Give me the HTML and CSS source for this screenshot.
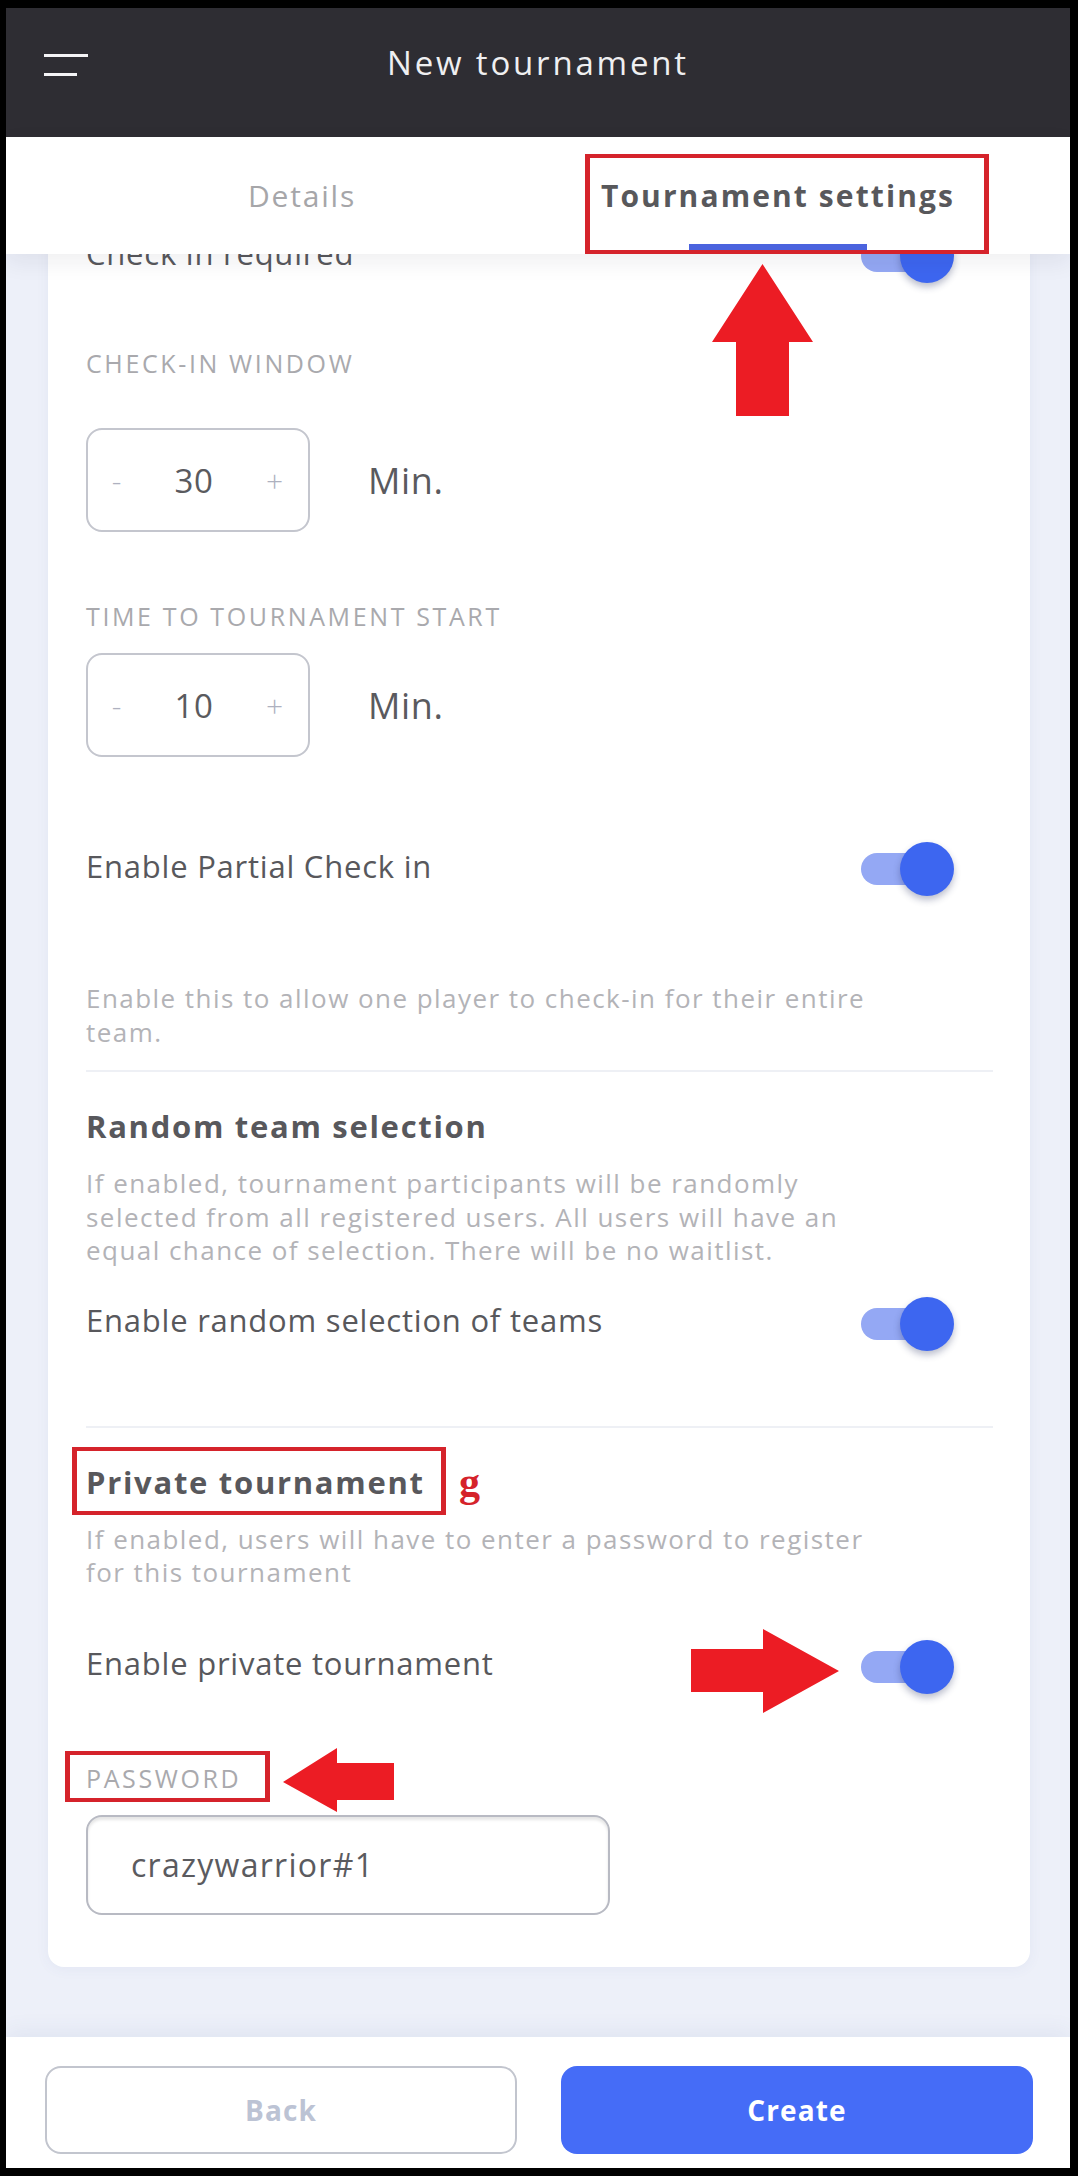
FILE: index.html
```html
<!DOCTYPE html>
<html lang="en">
<head>
  <meta charset="UTF-8" />
  <meta name="viewport" content="width=device-width, initial-scale=1.0" />
  <title>New tournament</title>
  <link rel="stylesheet" href="styles.css">
</head>
<body>
  <div class="phone">
    <header class="topbar">
      <button class="menu-btn" aria-label="Menu"><span></span><span></span></button>
      <h1>New tournament</h1>
    </header>

    <nav class="tabs">
      <div class="tab">Details</div>
      <div class="tab active">Tournament settings</div>
    </nav>

    <main class="scroller">
      <section class="card">
        <div class="switch-row">
          <span class="switch-label">Check in required</span>
          <span class="toggle"><span class="knob"></span></span>
        </div>

        <div class="field-label label-window">Check-in window</div>
        <div class="stepper-row stepper-window">
          <div class="stepper">
            <span class="step">-</span>
            <span class="step-value">30</span>
            <span class="step">+</span>
          </div>
          <span class="unit">Min.</span>
        </div>

        <div class="field-label label-start">Time to tournament start</div>
        <div class="stepper-row stepper-start">
          <div class="stepper">
            <span class="step">-</span>
            <span class="step-value">10</span>
            <span class="step">+</span>
          </div>
          <span class="unit">Min.</span>
        </div>

        <div class="switch-row row-partial">
          <span class="switch-label">Enable Partial Check in</span>
          <span class="toggle"><span class="knob"></span></span>
        </div>
        <p class="hint hint-partial">Enable this to allow one player to check-in for their entire team.</p>

        <hr class="divider">

        <h2 class="section-title">Random team selection</h2>
        <p class="hint">If enabled, tournament participants will be randomly selected from all registered users. All users will have an equal chance of selection. There will be no waitlist.</p>
        <div class="switch-row row-random">
          <span class="switch-label">Enable random selection of teams</span>
          <span class="toggle"><span class="knob"></span></span>
        </div>

        <hr class="divider divider-wide">

        <h2 class="section-title">Private tournament</h2>
        <p class="hint">If enabled, users will have to enter a password to register for this tournament</p>
        <div class="switch-row row-private">
          <span class="switch-label">Enable private tournament</span>
          <span class="toggle"><span class="knob"></span></span>
        </div>

        <div class="field-label label-password">Password</div>
        <input class="text-input" type="text" value="crazywarrior#1">
      </section>
    </main>

    <footer class="actions">
      <button class="btn btn-ghost">Back</button>
      <button class="btn btn-primary">Create</button>
    </footer>

    <!-- annotations drawn on top of the screenshot -->
    <div class="mark mark-tab"></div>
    <svg class="arrow arrow-up" width="101" height="152" viewBox="0 0 101 152">
      <polygon points="50.5,0 101,78 77,78 77,152 24,152 24,78 0,78" />
    </svg>
    <div class="mark mark-private"></div>
    <span class="note">g</span>
    <svg class="arrow arrow-right" width="148" height="84" viewBox="0 0 148 84">
      <polygon points="0,20 72,20 72,0 148,42 72,84 72,63 0,63" />
    </svg>
    <div class="mark mark-password"></div>
    <svg class="arrow arrow-left" width="111" height="64" viewBox="0 0 111 64">
      <polygon points="0,34 54,0 54,15 111,15 111,52 54,52 54,64" />
    </svg>
  </div>
</body>
</html>
```

FILE: styles.css
```css
* {
  box-sizing: border-box;
}
body {
  margin: 0;
  padding: 8px 8px 8px 6px;
  background: #000;
  font-family: 'Open Sans', 'Liberation Sans', sans-serif;
  letter-spacing: 0.04em;
  color: #58585c;
}
.phone {
  position: relative;
  height: 2160px;
  display: flex;
  flex-direction: column;
  background: #edf0f9;
  overflow: hidden;
}

/* top bar */
.topbar {
  flex: none;
  height: 129px;
  display: grid;
  grid-template-columns: 1fr auto 1fr;
  align-items: center;
  padding: 0 38px 20px;
  background: #2e2d33;
}
.topbar h1 {
  margin: 0;
  font-size: 33px;
  font-weight: 400;
  line-height: 40px;
  letter-spacing: 0.085em;
  color: #efeff1;
}
.menu-btn {
  justify-self: start;
  display: flex;
  flex-direction: column;
  gap: 16px;
  margin-top: 5px;
  padding: 0;
  background: none;
  border: none;
}
.menu-btn span {
  display: block;
  width: 44px;
  height: 3px;
  background: #f4f4f6;
}
.menu-btn span:last-child {
  width: 33px;
}

/* tabs */
.tabs {
  flex: none;
  position: relative;
  z-index: 2;
  height: 117px;
  display: flex;
  padding: 0 54px 0 58px;
  background: #fff;
  box-shadow: 0 8px 22px rgba(30, 30, 50, 0.07);
}
.tab {
  flex: 1;
  position: relative;
  display: flex;
  align-items: center;
  justify-content: center;
  font-size: 30px;
  letter-spacing: 0.06em;
  color: #a6a6a9;
}
.tab.active {
  font-weight: 700;
  letter-spacing: 0.07em;
  color: #58585b;
}
.tab.active::after {
  content: '';
  position: absolute;
  left: 50%;
  bottom: 4px;
  width: 178px;
  height: 6px;
  margin-left: -89px;
  background: #4b63de;
}

/* scrolling content */
.scroller {
  flex: 1;
  min-height: 0;
  overflow: hidden;
  padding: 0 40px 0 42px;
}
.card {
  margin-top: -60px;
  padding: 34px 37px 52px 38px;
  background: #fff;
  border-radius: 16px;
  box-shadow: 0 2px 14px rgba(70, 90, 150, 0.06);
}
.switch-row {
  display: flex;
  align-items: center;
  justify-content: space-between;
  height: 56px;
  padding-right: 39px;
}
.switch-label {
  font-size: 31px;
  line-height: 40px;
  letter-spacing: 0.025em;
  padding-bottom: 7px;
}
.toggle {
  position: relative;
  flex: none;
  width: 93px;
  height: 54px;
}
.toggle::before {
  content: '';
  position: absolute;
  left: 0;
  top: 11px;
  width: 80px;
  height: 32px;
  border-radius: 16px;
  background: #94a8f4;
}
.knob {
  position: absolute;
  right: 0;
  top: 0;
  width: 54px;
  height: 54px;
  border-radius: 50%;
  background: #3d66f0;
  box-shadow: 0 4px 7px rgba(30, 40, 90, 0.3);
}
.field-label {
  font-size: 25px;
  line-height: 30px;
  text-transform: uppercase;
  letter-spacing: 0.105em;
  color: #a9a9ad;
}
.stepper-row {
  display: flex;
  align-items: center;
}
.stepper {
  display: grid;
  grid-template-columns: 58px 96px 1fr;
  align-items: center;
  width: 224px;
  height: 104px;
  border: 2px solid #c4c6ce;
  border-radius: 16px;
  text-align: center;
}
.step {
  font-size: 30px;
  font-weight: 300;
  color: #aeb1bf;
}
.step-value {
  font-size: 33px;
  color: #5a5a5e;
}
.unit {
  margin-left: 58px;
  font-size: 36px;
  color: #5a5a5e;
}
.hint {
  margin: 21px 0 0;
  max-width: 797px;
  font-size: 26px;
  line-height: 33.5px;
  letter-spacing: 0.056em;
  color: #b3b3b7;
}
.divider {
  margin: 21px 0 0;
  height: 2px;
  border: 0;
  background: #eef0f5;
}
.section-title {
  margin: 34px 0 0;
  font-size: 31px;
  line-height: 40px;
  font-weight: 700;
  letter-spacing: 0.055em;
  color: #58585c;
}
.label-window { margin-top: 64px; }
.stepper-window { margin-top: 50px; }
.label-start { margin-top: 69px; }
.stepper-start { margin-top: 22px; }
.row-partial { margin-top: 84px; }
.hint-partial { margin-top: 85px; }
.row-random { margin-top: 28px; }
.divider-wide { margin-top: 74px; }
.row-private { margin-top: 49px; }
.label-password { margin-top: 68px; }
.text-input {
  display: block;
  width: 524px;
  height: 100px;
  margin-top: 22px;
  padding: 0 0 0 43px;
  border: 2px solid #b8bac3;
  border-radius: 16px;
  box-shadow: inset 0 3px 3px rgba(0, 0, 0, 0.1);
  font-family: inherit;
  font-size: 32px;
  letter-spacing: 0.04em;
  color: #5b5b5f;
}

/* bottom actions */
.actions {
  flex: none;
  position: relative;
  z-index: 2;
  height: 131px;
  display: grid;
  grid-template-columns: 1fr 1fr;
  gap: 44px;
  padding: 29px 37px 14px 39px;
  background: #fff;
  box-shadow: 0 -6px 20px rgba(60, 80, 140, 0.07);
}
.btn {
  height: 88px;
  border-radius: 16px;
  font-family: inherit;
  font-size: 28px;
  font-weight: 700;
  letter-spacing: 0.04em;
}
.btn-ghost {
  background: #fff;
  border: 2px solid #c2c5ce;
  color: #bcc3d4;
}
.btn-primary {
  background: #456cf7;
  border: none;
  color: #fff;
}

/* red annotations */
.mark {
  position: absolute;
  z-index: 5;
  border: solid #d5232b;
  border-width: 4px 5px;
}
.mark-tab {
  left: 579px;
  top: 146px;
  width: 404px;
  height: 100px;
}
.mark-private {
  left: 66px;
  top: 1439px;
  width: 374px;
  height: 68px;
}
.mark-password {
  left: 59px;
  top: 1743px;
  width: 205px;
  height: 51px;
}
.arrow {
  position: absolute;
  z-index: 5;
}
.arrow polygon {
  fill: #ec1c24;
}
.arrow-up {
  left: 706px;
  top: 256px;
}
.arrow-right {
  left: 685px;
  top: 1621px;
}
.arrow-left {
  left: 277px;
  top: 1740px;
}
.note {
  position: absolute;
  z-index: 5;
  left: 453px;
  top: 1453px;
  font-family: 'Liberation Serif', serif;
  font-size: 42px;
  font-weight: 700;
  line-height: 1;
  letter-spacing: 0;
  color: #d5232b;
}
```
